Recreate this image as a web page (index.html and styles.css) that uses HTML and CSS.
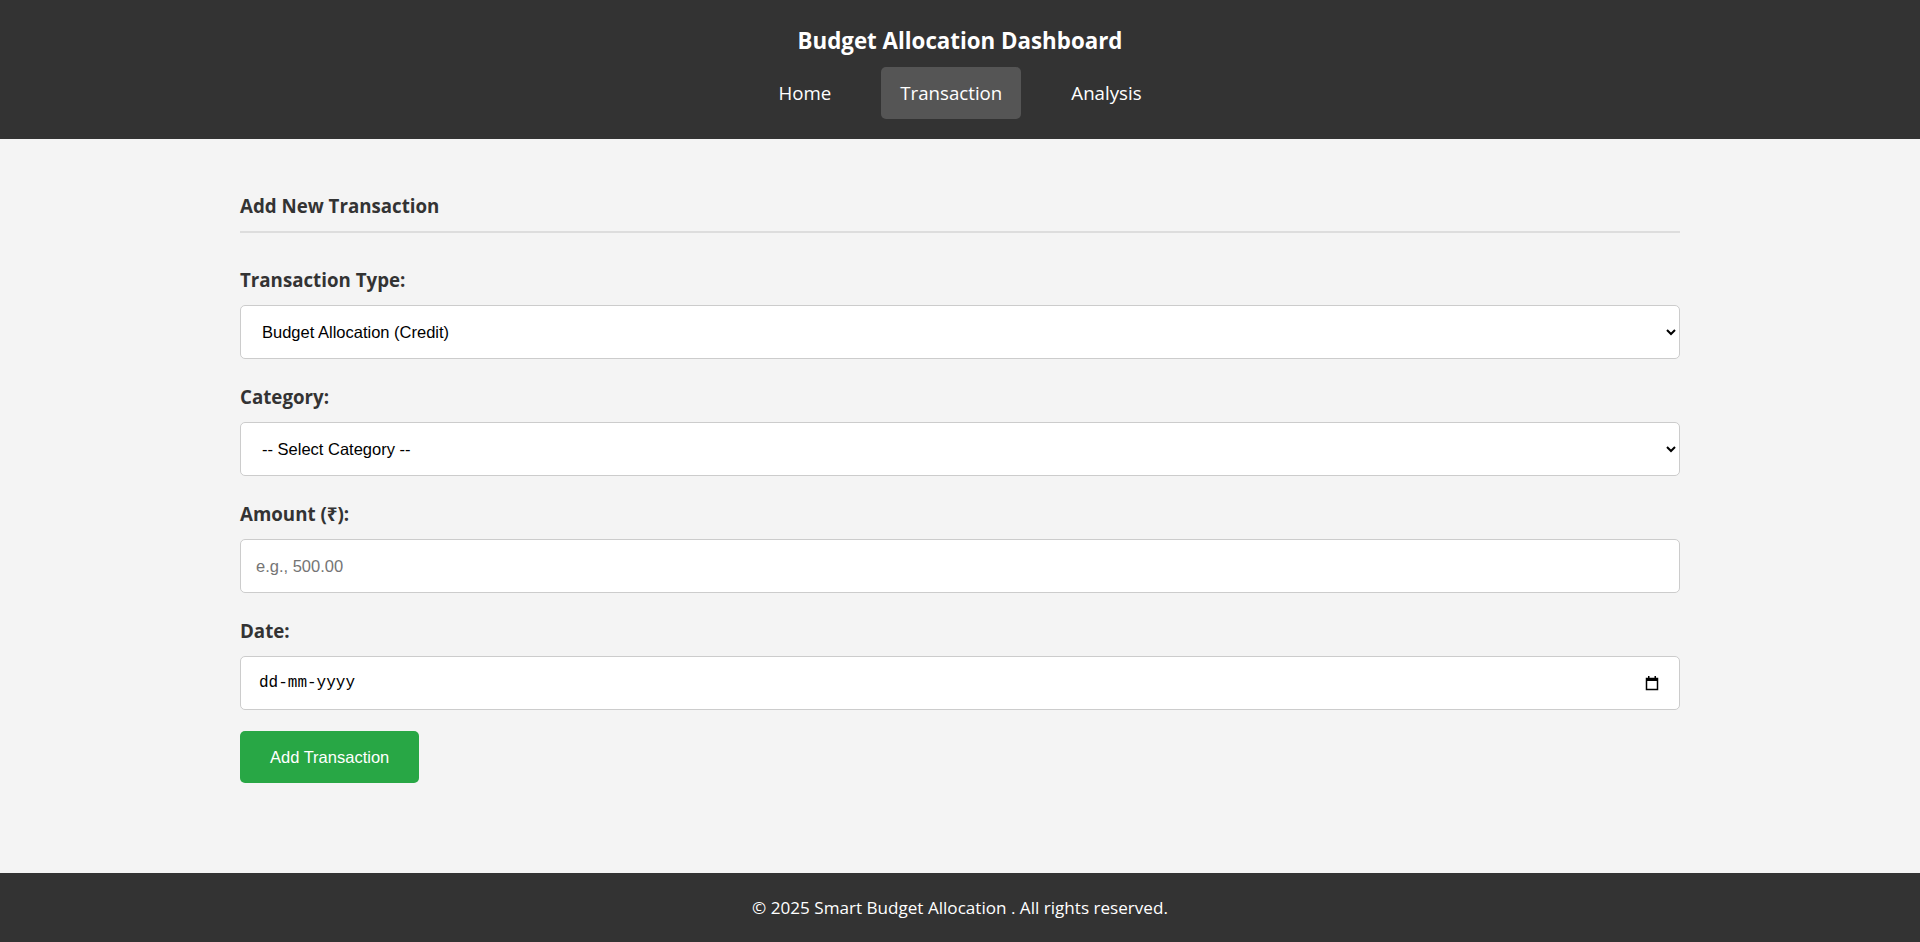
FILE: index.html
```html
<!DOCTYPE html>
<html lang="en">
<head>
<meta charset="utf-8">
<title>Budget Allocation Dashboard</title>
<link rel="stylesheet" href="styles.css">
</head>
<body>
<header class="site-header">
  <h1 class="site-title">Budget Allocation Dashboard</h1>
  <nav class="main-nav">
    <a class="nav-link" href="#">Home</a>
    <a class="nav-link nav-link--active" href="#">Transaction</a>
    <a class="nav-link" href="#">Analysis</a>
  </nav>
</header>
<main class="content">
  <section class="form-section">
    <h2 class="section-title">Add New Transaction</h2>
    <form class="txn-form">
      <div class="form-group">
        <label class="form-label" for="txn-type">Transaction Type:</label>
        <select id="txn-type" class="form-control form-control--select">
          <option>Budget Allocation (Credit)</option>
          <option>Expense (Debit)</option>
        </select>
      </div>
      <div class="form-group">
        <label class="form-label" for="txn-cat">Category:</label>
        <select id="txn-cat" class="form-control form-control--select">
          <option>-- Select Category --</option>
        </select>
      </div>
      <div class="form-group">
        <label class="form-label" for="txn-amount">Amount (₹):</label>
        <input id="txn-amount" class="form-control" type="number" placeholder="e.g., 500.00">
      </div>
      <div class="form-group form-group--last">
        <label class="form-label" for="txn-date">Date:</label>
        <div class="date-field">
          <input id="txn-date" class="form-control form-control--date" type="text" placeholder="dd-mm-yyyy">
          <svg class="date-icon" width="14" height="16" viewBox="0 0 14 16" aria-hidden="true">
            <rect x="1.5" y="3.5" width="11" height="11" fill="none" stroke="#000" stroke-width="1.5"/>
            <rect x="1" y="3" width="12" height="3" fill="#000"/>
            <rect x="3" y="1" width="1.5" height="3" fill="#000"/>
            <rect x="9.5" y="1" width="1.5" height="3" fill="#000"/>
          </svg>
        </div>
      </div>
      <button class="btn-submit" type="button">Add Transaction</button>
    </form>
  </section>
</main>
<footer class="site-footer">
  <p class="footer-text">© 2025 Smart Budget Allocation . All rights reserved.</p>
</footer>
</body>
</html>
```

FILE: styles.css
```css
* {
  box-sizing: border-box;
}

body {
  margin: 0;
  min-height: 100vh;
  display: flex;
  flex-direction: column;
  background: #f4f4f4;
  font-family: "Open Sans", "Noto Sans", sans-serif;
  color: #333;
}

.site-header {
  background: #333;
  color: #fff;
  text-align: center;
  padding: 25px 0 20px;
}

.site-title {
  margin: 0;
  font-size: 22.3px;
  line-height: 32px;
  font-weight: 700;
}

.main-nav {
  margin-top: 10px;
  display: flex;
  justify-content: center;
  gap: 31px;
}

.nav-link {
  color: #fff;
  text-decoration: none;
  font-size: 18.7px;
  line-height: 24px;
  padding: 14px 19px;
  border-radius: 5px;
}

.nav-link--active {
  background: #555;
}

.content {
  flex: 1;
  padding-top: 54px;
}

.form-section {
  width: 1440px;
  margin: 0 auto;
}

.section-title {
  margin: 0 0 34px;
  font-size: 18.72px;
  line-height: 25px;
  font-weight: 700;
  color: #333;
  padding-bottom: 13px;
  border-bottom: 2px solid #ddd;
}

.form-group {
  margin-bottom: 25px;
}

.form-group--last {
  margin-bottom: 21px;
}

.form-label {
  display: block;
  font-size: 18.72px;
  line-height: 25px;
  font-weight: 700;
  color: #333;
  margin-bottom: 13px;
}

.form-control {
  display: block;
  width: 100%;
  height: 54px;
  padding: 0 15px;
  border: 1px solid #ccc;
  border-radius: 5px;
  background: #fff;
  color: #000;
  font-family: "Liberation Sans", Arial, sans-serif;
  font-size: 16.5px;
}

.form-control--select {
  padding-left: 17px;
}

.form-control::placeholder {
  color: #757575;
}

.date-field {
  position: relative;
}

.form-control--date {
  padding-left: 18px;
  font-family: "Liberation Mono", monospace;
  font-size: 16px;
}

.form-control--date::placeholder {
  color: #000;
}

.date-icon {
  position: absolute;
  right: 21px;
  top: 19px;
}

.btn-submit {
  height: 52px;
  padding: 0 30px;
  border: none;
  border-radius: 5px;
  background: #28a745;
  color: #fff;
  font-family: "Liberation Sans", Arial, sans-serif;
  font-size: 16.5px;
  cursor: pointer;
}

.site-footer {
  background: #333;
  color: #fff;
  text-align: center;
  padding: 24px 0;
}

.footer-text {
  margin: 0;
  font-size: 17.1px;
  line-height: 21px;
}
```
